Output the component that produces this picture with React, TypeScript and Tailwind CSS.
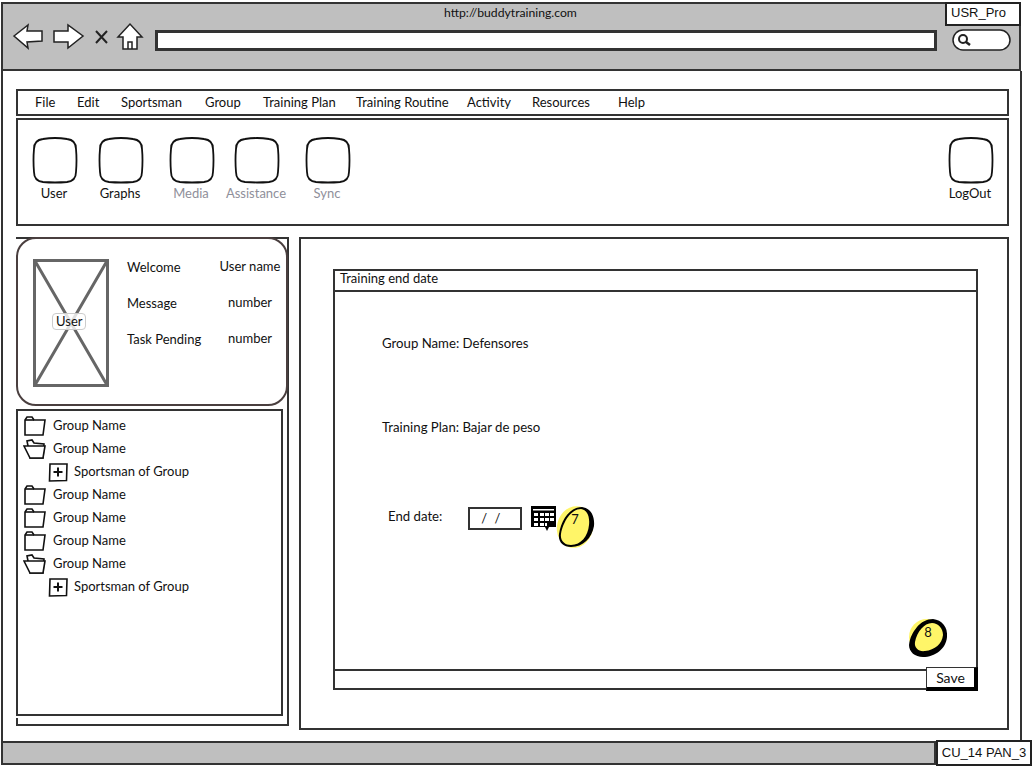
import React from 'react';

const menuItems = [
    { label: 'File', width: 'w-[42px]' },
    { label: 'Edit', width: 'w-[44px]' },
    { label: 'Sportsman', width: 'w-[84px]' },
    { label: 'Group', width: 'w-[58px]' },
    { label: 'Training Plan', width: 'w-[93px]' },
    { label: 'Training Routine', width: 'w-[111px]' },
    { label: 'Activity', width: 'w-[65px]' },
    { label: 'Resources', width: 'w-[86px]' },
    { label: 'Help', width: 'w-[40px]' },
];

const Squircle = () => (
    <svg width="46" height="47" viewBox="0 0 46 47" fill="white" stroke="#111" strokeWidth="1.8">
        <path d="M11 2 Q23 0 35 2 Q44 3 44 12 Q45 23 44 35 Q44 44 35 45 Q23 46 11 45 Q2 44 2 35 Q1 23 2 12 Q2 3 11 2 Z" />
    </svg>
);

const ToolItem = ({ label, muted, className }: { label: string; muted?: boolean; className?: string }) => (
    <div className={`w-[46px] flex flex-col items-center ${className ?? ''}`}>
        <Squircle />
        <span className={`pr-[2px] leading-[18px] whitespace-nowrap ${muted ? 'text-[#8f8f9a]' : 'text-[#111]'}`}>{label}</span>
    </div>
);

const ClosedFolder = () => (
    <svg width="24" height="22" viewBox="0 0 24 22" fill="white" stroke="#111" strokeWidth="1.6">
        <path d="M2 5 L2 20 L20 20 L22 5 L11 5 L9 2 L4 2 L2 5 Z" />
        <path d="M2 5 L11 5" />
    </svg>
);

const OpenFolder = () => (
    <svg width="24" height="22" viewBox="0 0 24 22" fill="white" stroke="#111" strokeWidth="1.6">
        <path d="M5 8 L4 3 L9 2 L11 5 L21 6 L20 20 L7 20 Z" />
        <path d="M1 8 L22 8 L20 20 L7 20 Z" />
    </svg>
);

const PlusBox = () => (
    <svg width="20" height="20" viewBox="0 0 20 20" fill="white" stroke="#111">
        <path d="M2 2 L19 2 L18.500 18.500 L1.500 19 Z" strokeWidth="1.600" />
        <path d="M10 5.500 L10 14.500 M5.500 10 L14.500 10" strokeWidth="2" />
    </svg>
);

const GroupRow = ({ open }: { open?: boolean }) => (
    <div className="h-[23px] flex items-center pl-[5px]">
        {open ? <OpenFolder /> : <ClosedFolder />}
        <span className="ml-[6px]">Group Name</span>
    </div>
);

const SportsmanRow = () => (
    <div className="h-[23px] flex items-center pl-[30px]">
        <PlusBox />
        <span className="ml-[6px]">Sportsman of Group</span>
    </div>
);

// marker 7 is tall with a heavy right side, marker 8 is rounder with a heavy bottom left
const MarkSeven = () => (
    <svg width="40" height="44" viewBox="0 0 40 44">
        <ellipse cx="19" cy="22" rx="18" ry="21" fill="#fff568" transform="rotate(14 19 22)" />
        <path fillRule="evenodd" fill="#000" d="M26 2 C34 3 39 10 38 21 C36 33 27 42 15 42 C7 42 2 37 3 29 C5 15 14 2 26 2 Z M25 4 C15 4 7 17 5 29 C4 36 9 40 15 40 C25 40 32 31 33 20 C34 11 31 5 25 4 Z" />
    </svg>
);

const MarkEight = () => (
    <svg width="40" height="44" viewBox="0 0 40 44">
        <circle cx="18" cy="19" r="18" fill="#fff568" />
        <path fillRule="evenodd" fill="#000" d="M24 1 C33 2 39 9 38 19 C37 31 26 39 14 39 C6 39 0 34 0 27 C1 19 4 14 8 9 C12 4 18 1 24 1 Z M23 5 C15 5 8 14 6 24 C5 30 10 34 16 33 C26 32 33 26 34 17 C34 10 29 5 23 5 Z" />
    </svg>
);

const YellowMark = ({ n, className }: { n: number; className: string }) => (
    <div className={`absolute ${className}`}>
        {n === 7 ? <MarkSeven /> : <MarkEight />}
        <span className="absolute left-0 top-[5px] w-[38px] text-center text-[13px] leading-[18px] text-[#111]">{n}</span>
    </div>
);

const App = () => {
    return (
        <div className="relative w-[1033px] h-[768px] overflow-hidden bg-white text-[13px] text-[#111] font-['Lato','Open_Sans',sans-serif]">
            {/* browser top bar */}
            <div className="relative mt-[2px] ml-[1px] w-[1020px] h-[69px] bg-[#bfbfbf] border-2 border-[#333] flex items-center pl-[9px] pt-[6px]">
                <span className="absolute top-[1px] left-[441px] text-[12.2px] leading-[16px]">http://buddytraining.com</span>
                <svg width="134" height="30" viewBox="0 0 134 30" fill="white" stroke="#222" strokeWidth="1.500" className="shrink-0 -mt-[6px]">
                    <path d="M2 14 L16 3 L15 9 L30 9 L30 19 L15 20 L16 26 Z" />
                    <path d="M42 9 L56 9 L56 3 L71 14 L56 26 L56 20 L42 20 Z" />
                    <path d="M84 9 L95 21 M95 9 L84 21" fill="none" strokeWidth="2" />
                    <path d="M106 15 L118 2 L130 15 L125 15 L125 27 L111 27 L111 15 Z" />
                    <path d="M116 27 L116 20 L120 20 L120 27" fill="none" />
                </svg>
                <div className="ml-[9px] w-[782px] h-[21px] mt-[1px] bg-white border-[3px] border-[#333] shrink-0" />
                <svg width="60" height="22" viewBox="0 0 60 22" fill="white" stroke="#222" className="ml-[15px] shrink-0 mt-[1px]">
                    <rect x="1" y="1" width="57" height="20" rx="10" strokeWidth="1.500" />
                    <circle cx="11" cy="10" r="4" fill="none" strokeWidth="2" />
                    <path d="M14 13 L18 16" strokeWidth="2.500" />
                </svg>
                <div className="absolute -top-[2px] -right-[2px] w-[76px] h-[24px] bg-white border-2 border-[#222] pl-[4px] leading-[18px] text-[13px] font-['Liberation_Sans',sans-serif]">USR_Pro</div>
            </div>

            {/* page body */}
            <div className="w-[1021px] h-[670px] ml-[1px] border-x-2 border-[#333] pl-[13px] pr-[11px] pt-[18px]">
                {/* menu */}
                <div className="h-[27px] border-2 border-[#333] flex items-center pl-[17px] whitespace-nowrap">
                    {menuItems.map(item => <span key={item.label} className={item.width}>{item.label}</span>)}
                </div>

                {/* toolbar */}
                <div className="mt-[2px] h-[108px] border-2 border-[#333] flex pl-[14px] pt-[17px]">
                    <ToolItem label="User" />
                    <ToolItem label="Graphs" className="ml-[20px]" />
                    <ToolItem label="Media" muted className="ml-[25px]" />
                    <ToolItem label="Assistance" muted className="ml-[19px]" />
                    <ToolItem label="Sync" muted className="ml-[25px]" />
                    <ToolItem label="LogOut" className="ml-auto mr-[13px]" />
                </div>

                <div className="mt-[11px] flex items-start">
                    {/* left column */}
                    <div className="w-[273px] h-[489px] shrink-0 border-2 border-t-0 border-[#333] border-l-0 relative">
                        <div className="absolute left-0 top-0 w-full h-[2px] bg-[#333]" />
                        <div className="absolute left-0 bottom-0 w-[2px] h-[6px] bg-[#333]" />
                        <div className="relative w-[272px] h-[169px] bg-white border-2 border-[#4a3f3f] rounded-[20px] flex pl-[15px] pt-[20px]">
                            <div className="relative w-[76px] h-[128px] shrink-0">
                                <svg width="76" height="128" viewBox="0 0 76 128" fill="none" stroke="#666" strokeWidth="3">
                                    <rect x="1.500" y="1.500" width="73" height="125" />
                                    <path d="M2 2 L74 126 M74 2 L2 126" />
                                </svg>
                                <span className="absolute left-[19px] top-[54px] px-[3px] h-[17px] leading-[15px] border border-[#ccc] rounded-[4px] bg-white/80">User</span>
                            </div>
                            <div className="ml-[18px] flex-1 grid grid-cols-[92px_1fr] auto-rows-[36px] pr-[5px] -mt-[2px] whitespace-nowrap">
                                <span className="mt-[1px]">Welcome</span><span className="text-center">User name</span>
                                <span className="mt-[1px]">Message</span><span className="text-center">number</span>
                                <span className="mt-[1px]">Task Pending</span><span className="text-center">number</span>
                            </div>
                        </div>
                        <div className="mt-[3px] w-[267px] h-[307px] border-2 border-[#333] pt-[3px]">
                            <GroupRow />
                            <GroupRow open />
                            <SportsmanRow />
                            <GroupRow />
                            <GroupRow />
                            <GroupRow />
                            <GroupRow open />
                            <SportsmanRow />
                        </div>
                    </div>

                    {/* main panel */}
                    <div className="ml-[10px] flex-1 h-[493px] border-2 border-[#333] pt-[30px] pl-[32px] pr-[29px]">
                        <div className="relative">
                            <div className="h-[23px] border-2 border-[#333] pl-[5px] leading-[15px]">Training end date</div>
                            <div className="relative h-[378px] border-x-2 border-[#333] pl-[47px]">
                                <p className="pt-[42px] leading-[18px] text-[13.2px]">Group Name: Defensores</p>
                                <p className="mt-[66px] leading-[18px] text-[13.2px]">Training Plan: Bajar de peso</p>
                                <div className="mt-[70px] ml-[6px] flex items-center">
                                    <span className="leading-[18px] -mt-[5px] text-[13.2px]">End date:</span>
                                    <div className="ml-[26px] w-[54px] h-[23px] border-2 border-[#333] pl-[11px] leading-[19px] tracking-[2px]">/ /</div>
                                    <svg width="25" height="25" viewBox="0 0 25 25" className="ml-[9px]">
                                        <path d="M0 0 H25 V21 H18 L16 25 L14 21 H0 Z" fill="#000" />
                                        <g fill="white">
                                            <rect x="2" y="3" width="21" height="1.500" />
                                            <rect x="3" y="7" width="4" height="3" /><rect x="9" y="7" width="4" height="3" /><rect x="14" y="7" width="4" height="3" /><rect x="19" y="7" width="4" height="3" />
                                            <rect x="3" y="12" width="4" height="3" /><rect x="9" y="12" width="4" height="3" /><rect x="14" y="12" width="4" height="3" /><rect x="19" y="12" width="4" height="3" />
                                            <rect x="3" y="17" width="4" height="3" /><rect x="9" y="17" width="4" height="3" /><rect x="14" y="17" width="2" height="3" />
                                        </g>
                                    </svg>
                                </div>
                            </div>
                            <div className="relative h-[21px] border-2 border-[#333] -mt-[1px]">
                                <div className="absolute -right-[2px] -top-[4px] w-[52px] h-[24px] bg-white border border-[#333] border-r-[4px] border-b-[4px] border-r-black border-b-black text-center text-[14px] leading-[19px]">Save</div>
                            </div>
                            <YellowMark n={7} className="left-[223px] top-[236px]" />
                            <YellowMark n={8} className="left-[576px] top-[349px]" />
                        </div>
                    </div>
                </div>
            </div>

            {/* status bar */}
            <div className="flex h-[26px] ml-[1px] items-start">
                <div className="w-[935px] h-[24px] bg-[#bfbfbf] border-2 border-[#333]" />
                <div className="w-[96px] h-[26px] -mt-[1px] bg-white border-2 border-[#222] text-center leading-[22px] font-['Liberation_Sans',sans-serif] text-[13px]">CU_14 PAN_3</div>
            </div>
        </div>
    );
};

export default App;
